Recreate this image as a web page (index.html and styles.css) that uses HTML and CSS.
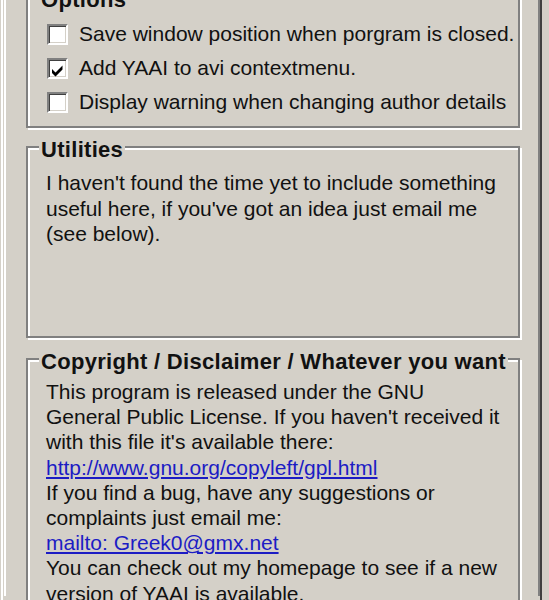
FILE: index.html
```html
<!DOCTYPE html>
<html lang="en">
<head>
<meta charset="utf-8">
<title>YAAI Options</title>
<link rel="stylesheet" href="styles.css">
</head>
<body>
<div class="frame">
  <div class="page">
    <section class="group group-options">
      <div class="legend">Options</div>
      <ul class="checks">
        <li class="check-row"><span class="checkbox"></span><span class="check-label">Save window position when porgram is closed.</span></li>
        <li class="check-row"><span class="checkbox"><svg class="tick" viewBox="0 0 17 17" width="17" height="17"><polygon points="3,9 6.5,12.5 13.5,5.5 13.5,9.5 6.5,16.5 3,13" fill="#000"/></svg></span><span class="check-label">Add YAAI to avi contextmenu.</span></li>
        <li class="check-row"><span class="checkbox"></span><span class="check-label">Display warning when changing author details</span></li>
      </ul>
    </section>

    <section class="group group-utilities">
      <div class="legend">Utilities</div>
      <p class="group-text">I haven't found the time yet to include something<br>useful here, if you've got an idea just email me<br>(see below).</p>
    </section>

    <section class="group group-copyright">
      <div class="legend">Copyright / Disclaimer / Whatever you want</div>
      <p class="group-text copy-text">This program is released under the GNU<br>General Public License. If you haven't received it<br>with this file it's available there:<br><a class="link" href="#">http://www.gnu.org/copyleft/gpl.html</a><br>If you find a bug, have any suggestions or<br>complaints just email me:<br><a class="link" href="#">mailto: Greek0@gmx.net</a><br>You can check out my homepage to see if a new<br>version of YAAI is available.</p>
    </section>
  </div>
</div>
</body>
</html>
```

FILE: styles.css
```css
html, body {
  margin: 0;
  padding: 0;
}

body {
  background: #d4d0c8;
  color: #111;
  font-family: "Liberation Sans", Arial, sans-serif;
  font-size: 21px;
  height: 600px;
  overflow: hidden;
}

.frame {
  box-sizing: border-box;
  width: 541px;
  height: 600px;
  margin-left: 1px;
  border-left: 2px solid #ffffff;
  border-right: 2px solid #404040;
  overflow: hidden;
}

.page {
  box-sizing: border-box;
  height: 100%;
  margin-left: 1px;
  border-left: 2px solid #ffffff;
  border-right: 2px solid #808080;
}

.group {
  box-sizing: border-box;
  margin: 0 18px 0 20px;
  border: 2px solid #808080;
  box-shadow: inset 2px 2px 0 #ffffff, 2px 2px 0 #ffffff;
}

.group-options {
  margin-top: -4px;
  height: 132px;
}

.group-utilities {
  margin-top: 18px;
  height: 192px;
}

.group-copyright {
  margin-top: 20px;
  height: 260px;
}

.legend {
  width: fit-content;
  margin: -11px 0 0 11px;
  padding: 0 2px;
  background: #d4d0c8;
  font-weight: bold;
  font-size: 22px;
  line-height: 26px;
  letter-spacing: 0.3px;
  white-space: nowrap;
}

.checks {
  list-style: none;
  margin: 0;
  padding: 4px 0 0 19px;
}

.check-row {
  display: flex;
  align-items: center;
  gap: 11px;
  height: 34px;
  white-space: nowrap;
}

.checkbox {
  box-sizing: border-box;
  flex: none;
  width: 21px;
  height: 21px;
  border: 2px solid;
  border-color: #808080 #ffffff #ffffff #808080;
  box-shadow: inset 1px 1px 0 #404040, inset -1px -1px 0 #d4d0c8;
  background: #ffffff;
}

.tick {
  display: block;
}

.check-label {
  line-height: 26px;
}

.group-text {
  margin: 0;
  padding: 7px 0 0 18px;
  line-height: 25.5px;
  white-space: nowrap;
}

.copy-text {
  padding-top: 4px;
  line-height: 25.2px;
}

.link {
  color: #1c1cc4;
  text-decoration: underline;
}
```
